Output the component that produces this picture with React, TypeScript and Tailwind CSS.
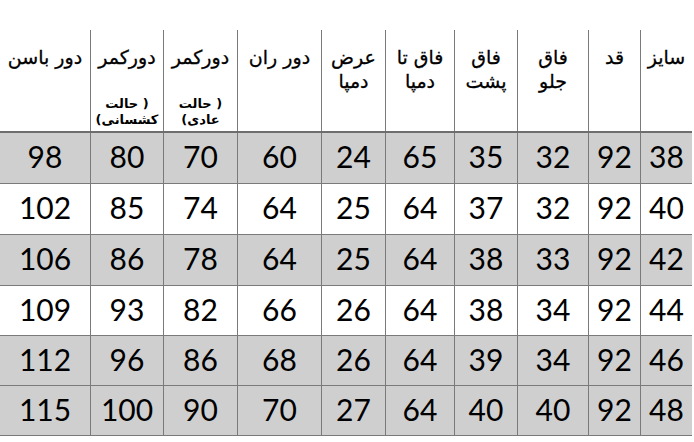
import React from "react";

type Head = { lines: string[]; sub?: string[] };

const heads: Head[] = [
  { lines: ["دور باسن"] },
  { lines: ["دورکمر"], sub: ["حالت )", "(کشسانی"] },
  { lines: ["دورکمر"], sub: ["حالت )", "(عادی"] },
  { lines: ["دور ران"] },
  { lines: ["عرض", "دمپا"] },
  { lines: ["فاق تا", "دمپا"] },
  { lines: ["فاق", "پشت"] },
  { lines: ["فاق", "جلو"] },
  { lines: ["قد"] },
  { lines: ["سایز"] },
];

const rows: { v: number[]; grey: boolean; h: string }[] = [
  { v: [98, 80, 70, 60, 24, 65, 35, 32, 92, 38], grey: true, h: "h-[51px]" },
  { v: [102, 85, 74, 64, 25, 64, 37, 32, 92, 40], grey: false, h: "h-[51px]" },
  { v: [106, 86, 78, 64, 25, 64, 38, 33, 92, 42], grey: true, h: "h-[51px]" },
  { v: [109, 93, 82, 66, 26, 64, 38, 34, 92, 44], grey: false, h: "h-[50px]" },
  { v: [112, 96, 86, 68, 26, 64, 39, 34, 92, 46], grey: true, h: "h-[50px]" },
  { v: [115, 100, 90, 70, 27, 64, 40, 40, 92, 48], grey: true, h: "h-[50px]" },
];

const gridCols =
  "grid grid-cols-[90px_73px_74px_84px_64px_69px_63px_71px_52px_52px] w-[692px]";

export default function App() {
  return (
    <div className="w-[694px] h-[442px] bg-white overflow-hidden">
      <div className="pt-[30px]">
        <div className={`${gridCols} h-[103px] border-b-2 border-[#6e6e6e] box-border`}>
          {heads.map((h, i) => (
            <div
              key={i}
              className={`flex flex-col items-center text-black ${i > 0 ? "border-l border-[#7a7a7a]" : ""} pt-[15px] pb-[3px]`}
              style={{ fontFamily: '"DejaVu Sans", sans-serif' }}
            >
              {h.lines.map((l, j) => (
                <div key={j} dir="rtl" className="text-[19px] leading-[24px] whitespace-nowrap [-webkit-text-stroke:0.3px_black]">
                  {l}
                </div>
              ))}
              {h.sub && (
                <div className="mt-auto flex flex-col items-center">
                  {h.sub.map((s, j) => (
                    <div key={j} dir="ltr" className="text-[13px] leading-[16px] font-bold whitespace-nowrap">
                      {s}
                    </div>
                  ))}
                </div>
              )}
            </div>
          ))}
        </div>
        {rows.map((r, ri) => (
          <div
            key={ri}
            className={`${gridCols} ${r.h} border-b border-[#7a7a7a] box-border ${r.grey ? "bg-[#cfcfcf]" : "bg-white"}`}
          >
            {r.v.map((v, ci) => (
              <div
                key={ci}
                className={`flex items-center justify-center text-[30px] text-black pb-[3px] ${ci > 0 ? "border-l border-[#7a7a7a]" : ""}`}
                style={{ fontFamily: 'Lato, sans-serif' }}
              >
                {v}
              </div>
            ))}
          </div>
        ))}
      </div>
    </div>
  );
}
